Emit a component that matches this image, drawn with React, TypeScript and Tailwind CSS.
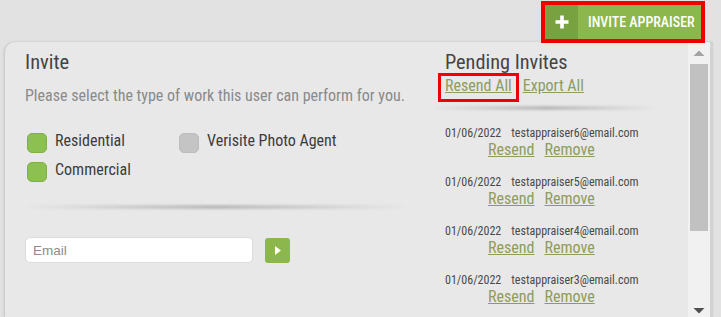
const invites = [
  { date: '01/06/2022', email: 'testappraiser6@email.com' },
  { date: '01/06/2022', email: 'testappraiser5@email.com' },
  { date: '01/06/2022', email: 'testappraiser4@email.com' },
  { date: '01/06/2022', email: 'testappraiser3@email.com' },
]

function Check({ on, label }: { on: boolean; label: string }) {
  return (
    <div className="flex items-start gap-[8px] h-[29px]">
      <span className={`w-[20px] h-[20px] rounded-[5px] border shrink-0 ${on ? 'bg-[#8cc152] border-[#7fb046]' : 'bg-[#c4c4c4] border-[#bcbcbc]'}`} />
      <span className="text-[16px] leading-[20px] text-[#3c3c3c] -mt-[2px]">{label}</span>
    </div>
  )
}

function Divider({ className }: { className: string }) {
  return (
    <div className={`h-[4px] rounded-full bg-gradient-to-r from-transparent via-[#bababa] to-transparent blur-[1px] ${className}`} />
  )
}

export default function App() {
  return (
    <div
      className="w-[721px] h-[317px] overflow-hidden bg-[#e2e2e2] flex flex-col [font-stretch:75%]"
      style={{ fontFamily: 'Roboto, "Liberation Sans", sans-serif' }}
    >
      {/* top bar */}
      <div className="h-[42px] flex justify-end pr-[16px] pt-[1px] shrink-0">
        <div className="relative z-10 border-[4px] border-[#f00000] h-[42px]">
          <button className="w-[156px] h-[34px] flex bg-[#8bb74d] text-white">
            <span className="w-[33px] h-full bg-[#78a140] flex items-center justify-center">
              <svg width="14" height="14" viewBox="0 0 14 14">
                <path d="M7 0.5 V13.5 M0.5 7 H13.5" stroke="#fff" strokeWidth="3.6" />
              </svg>
            </span>
            <span className="flex-1 pl-[10px] flex items-center text-[14px] font-medium">INVITE APPRAISER</span>
          </button>
        </div>
      </div>

      {/* modal */}
      <div className="flex-1 ml-[5px] mr-[8px] bg-[#e8e8e8] rounded-tl-[10px] flex border-r-[3px] border-[#d2d2d2] shadow-[-1px_0_3px_rgba(0,0,0,0.14)]">
        <div className="w-[420px] shrink-0 pl-[20px] pt-[8px]">
          <h2 className="text-[20.5px] leading-[24px] text-[#444444]">Invite</h2>
          <p className="mt-[12px] text-[16px] leading-[20px] text-[#8a8a8a]">
            Please select the type of work this user can perform for you.
          </p>
          <div className="flex mt-[27px] pl-[2px]">
            <div className="w-[152px]">
              <Check on label="Residential" />
              <Check on label="Commercial" />
            </div>
            <Check on={false} label="Verisite Photo Agent" />
          </div>
          <Divider className="mt-[14px] w-[382px]" />
          <div className="flex items-center mt-[28px] gap-[12px]">
            <input
              placeholder="Email"
              className="w-[228px] h-[26px] bg-white rounded-[5px] border border-[#dcdcdc] px-[7px] text-[13.5px] placeholder:text-[#8c8c8c] outline-none"
              style={{ fontFamily: '"Liberation Sans", Arial, sans-serif' }}
            />
            <button className="w-[25px] h-[25px] bg-[#8bb74d] rounded-[3px] flex items-center justify-center">
              <svg width="6" height="9" viewBox="0 0 6 9"><path d="M0 0 L6 4.5 L0 9 Z" fill="#fff" /></svg>
            </button>
          </div>
        </div>

        <div className="flex-1 pl-[20px] pt-[8px]">
          <h2 className="text-[20.3px] leading-[24px] text-[#444444]">Pending Invites</h2>
          <div className="flex items-start gap-[4px] -ml-[7px] -mt-[1px] text-[16px] leading-[18px] text-[#8e9c5c]">
            <span className="border-[3px] border-[#f00000] h-[29px] px-[4px] pt-[1px]">
              <a className="underline">Resend All</a>
            </span>
            <a className="pt-[4px] underline">Export All</a>
          </div>
          <Divider className="mt-[4px] -ml-[12px] w-[224px]" />
          <div className="mt-[15px] flex flex-col gap-[15px]">
            {invites.map((r) => (
              <div key={r.email}>
                <div className="text-[12px] leading-[16px] text-[#4a4a4a]">
                  {r.date}
                  <span className="ml-[10px]">{r.email}</span>
                </div>
                <div className="flex gap-[10px] pl-[43px] text-[16px] leading-[18px] text-[#8e9c5c]">
                  <a className="underline">Resend</a>
                  <a className="underline">Remove</a>
                </div>
              </div>
            ))}
          </div>
        </div>

        {/* scrollbar */}
        <div className="w-[22px] shrink-0 bg-[#f1f1f1] flex flex-col items-center mt-[1px] px-[2px]">
          <svg width="20" height="21" viewBox="0 0 20 21"><path d="M4.5 13 L10 7.5 L15.5 13 Z" fill="#a3a3a3" /></svg>
          <div className="w-full h-[167px] bg-[#c1c1c1]" />
          <div className="flex-1" />
          <svg width="20" height="16" viewBox="0 0 20 16"><path d="M4.5 7 L15.5 7 L10 12.5 Z" fill="#505050" /></svg>
        </div>
      </div>
    </div>
  )
}
